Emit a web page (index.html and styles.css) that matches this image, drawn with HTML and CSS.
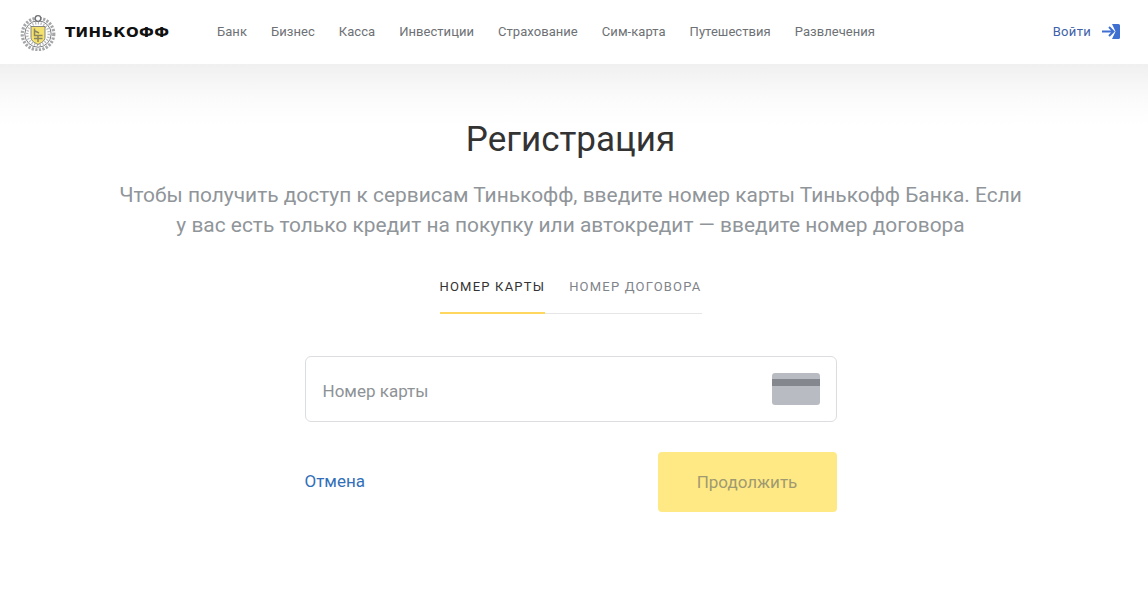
FILE: index.html
```html
<!DOCTYPE html>
<html lang="ru">
<head>
<meta charset="utf-8">
<title>Регистрация</title>
<link rel="stylesheet" href="styles.css">
</head>
<body>
<header class="topbar">
  <a class="logo" href="#">
    <svg class="logo-mark" width="38" height="38" viewBox="0 0 38 38" aria-hidden="true">
      <circle cx="19" cy="21" r="15.800" fill="none" stroke="#a4a6a8" stroke-width="3.200" stroke-dasharray="2.200 1.400"/>
      <circle cx="19" cy="21" r="13.200" fill="#fff" stroke="#707275" stroke-width="0.900"/>
      <circle cx="19" cy="21" r="10.800" fill="none" stroke="#b5b7b9" stroke-width="2.600" stroke-dasharray="1.200 1.600"/>
      <circle cx="19" cy="5.500" r="2.800" fill="#fff" stroke="#6e7073" stroke-width="1.300"/>
      <path d="M12 13.500h14v11c0 3.500-3.500 5-7 7-3.500-2-7-3.500-7-7z" fill="#f4e26c" stroke="#77787a" stroke-width="0.900"/>
      <path d="M15.500 15.500v7h8M19 22.500v6.500M15 25.500h8.500M16 18l4 2" fill="none" stroke="#8a8560" stroke-width="1.500"/>
    </svg>
    <span class="logo-text">ТИНЬКОФФ</span>
  </a>
  <nav class="nav">
    <a href="#">Банк</a>
    <a href="#">Бизнес</a>
    <a href="#">Касса</a>
    <a href="#">Инвестиции</a>
    <a href="#">Страхование</a>
    <a href="#">Сим-карта</a>
    <a href="#">Путешествия</a>
    <a href="#">Развлечения</a>
  </nav>
  <a class="login" href="#">
    <span>Войти</span>
    <svg width="18" height="15" viewBox="0 0 18 15" aria-hidden="true">
      <path d="M10 0h6.500A1.500 1.500 0 0 1 18 1.500v12a1.500 1.500 0 0 1-1.500 1.500H10l3.500-7.500z" fill="#3f6fd1"/>
      <path d="M0 7.500h11M7 3l4.500 4.500L7 12" fill="none" stroke="#3f6fd1" stroke-width="2"/>
    </svg>
  </a>
</header>
<main class="page">
  <h1 class="title">Регистрация</h1>
  <p class="lead">Чтобы получить доступ к сервисам Тинькофф, введите номер карты Тинькофф Банка. Если<br>у вас есть только кредит на покупку или автокредит — введите номер договора</p>
  <div class="tabs">
    <a class="tab tab-active" href="#">НОМЕР КАРТЫ</a>
    <a class="tab" href="#">НОМЕР ДОГОВОРА</a>
  </div>
  <form class="form">
    <label class="field">
      <span class="placeholder">Номер карты</span>
      <span class="card-icon"><span class="card-stripe"></span></span>
    </label>
    <div class="actions">
      <a class="cancel" href="#">Отмена</a>
      <button class="submit" type="button" disabled>Продолжить</button>
    </div>
  </form>
</main>
</body>
</html>
```
FILE: styles.css
```css
* { box-sizing: border-box; }
html, body { margin: 0; height: 100%; }
body {
  font-family: Roboto, "Liberation Sans", sans-serif;
  background: #fff;
  color: #333;
  overflow: hidden;
}
a { text-decoration: none; color: inherit; }

.topbar {
  display: flex;
  align-items: center;
  height: 64px;
  padding: 0 28px 2px 19px;
  background: #fff;
}
.logo { display: flex; align-items: center; width: 198px; flex: none; margin-top: 2px; }
.logo-mark { flex: none; }
.logo-text {
  margin-left: 8px;
  font-family: "DejaVu Sans", sans-serif;
  font-weight: 700;
  font-size: 13.500px;
  letter-spacing: 0.400px;
  color: #111;
  transform: scaleX(1.105);
  transform-origin: left center;
}
.nav { display: flex; gap: 24px; font-size: 13px; letter-spacing: 0.050px; color: #6d7175; }
.login {
  margin-left: auto;
  display: flex;
  align-items: center;
  gap: 11px;
  font-size: 13px;
  letter-spacing: 0.300px;
  color: #3f5fa8;
}

.page {
  display: flex;
  flex-direction: column;
  align-items: center;
  height: 541px;
  padding: 55px 7px 0 0;
  background: linear-gradient(#f0f0f0 0, #fbfbfb 35px, #fff 62px);
}
.title {
  margin: 0;
  font-size: 35px;
  line-height: 42px;
  font-weight: 400;
  color: #333;
}
.lead {
  margin: 19px 0 0;
  font-size: 20.900px;
  line-height: 30px;
  color: #90959a;
  text-align: center;
  white-space: nowrap;
}
.tabs {
  display: flex;
  gap: 24px;
  margin-top: 25px;
  width: 262px;
  height: 49px;
  border-bottom: 1px solid #e6e6e6;
}
.tab {
  height: 49px;
  padding-top: 13px;
  font-size: 13px;
  line-height: 18px;
  letter-spacing: 1.200px;
  color: #80848a;
  white-space: nowrap;
}
.tab-active { color: #333; border-bottom: 2px solid #ffd75e; }

.form { width: 532px; margin-top: 42px; }
.field {
  display: flex;
  align-items: center;
  justify-content: space-between;
  height: 66px;
  padding: 0 16px 0 17px;
  border: 1px solid #dcdde0;
  border-radius: 6px;
}
.placeholder { margin-top: 4px; font-size: 17px; color: #8e9296; }
.card-icon {
  display: block;
  width: 48px;
  height: 32px;
  padding-top: 6px;
  background: #b9bbc2;
  border-radius: 3px;
}
.card-stripe { display: block; height: 7px; background: #85878e; }
.actions {
  display: flex;
  align-items: center;
  justify-content: space-between;
  margin-top: 30px;
}
.cancel { margin-bottom: 2px; font-size: 17px; color: #336fb8; }
.submit {
  width: 179px;
  height: 60px;
  padding: 0;
  border: 0;
  border-radius: 4px;
  background: #ffe985;
  font-family: inherit;
  font-size: 17px;
  color: #a09a70;
}
```
